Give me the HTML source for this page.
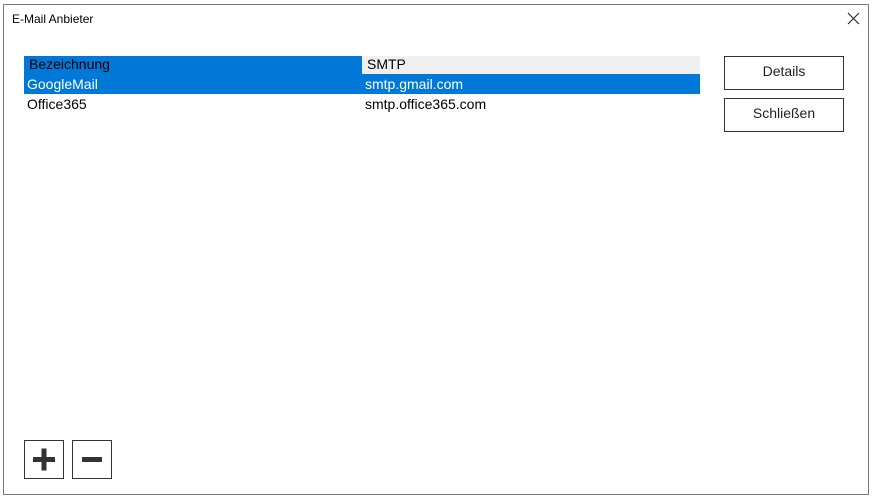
<!DOCTYPE html>
<html><head><style>
body{margin:0;width:875px;height:500px;background:#fff;position:relative;font-family:"Liberation Sans",sans-serif;overflow:hidden}
.win{position:absolute;left:3px;top:4px;width:864px;height:489px;border:1px solid #7a7a7a;background:#fff}
.a{position:absolute;white-space:nowrap}
.t{font-size:14px;line-height:20px}
.btn{position:absolute;border:1px solid #333;background:#fff;font-size:14px;text-align:center;box-sizing:border-box;color:#222}
</style></head><body>
<div class="win"></div>
<div class="a" style="left:12px;top:12px;font-size:12px">E-Mail Anbieter</div>
<svg class="a" style="left:847px;top:12px" width="13" height="13"><path d="M1 1L12 12M12 1L1 12" stroke="#222" stroke-width="1.1"/></svg>
<div class="a" style="left:24px;top:56px;width:338px;height:18px;background:#0078d7"></div>
<div class="a" style="left:362px;top:56px;width:338px;height:18px;background:#f0f0f0"></div>
<div class="a" style="left:24px;top:74px;width:676px;height:20px;background:#0078d7"></div>
<div class="a t" style="left:29px;top:54px;color:#000">Bezeichnung</div>
<div class="a t" style="left:367px;top:54px;color:#000">SMTP</div>
<div class="a t" style="left:27px;top:74px;color:#fff">GoogleMail</div>
<div class="a t" style="left:365px;top:74px;color:#fff">smtp.gmail.com</div>
<div class="a t" style="left:27px;top:94px;color:#000">Office365</div>
<div class="a t" style="left:365px;top:94px;color:#000">smtp.office365.com</div>
<div class="btn" style="left:724px;top:56px;width:120px;height:34px;line-height:29px">Details</div>
<div class="btn" style="left:724px;top:98px;width:120px;height:34px;line-height:29px">Schließen</div>
<div class="btn" style="left:24px;top:440px;width:40px;height:39px"><svg width="38" height="37"><path d="M8 18.5H30M19 7.5V29.5" stroke="#333" stroke-width="5"/></svg></div>
<div class="btn" style="left:72px;top:440px;width:40px;height:39px"><svg width="38" height="37"><path d="M9 18.5H29" stroke="#333" stroke-width="5"/></svg></div>
</body></html>
